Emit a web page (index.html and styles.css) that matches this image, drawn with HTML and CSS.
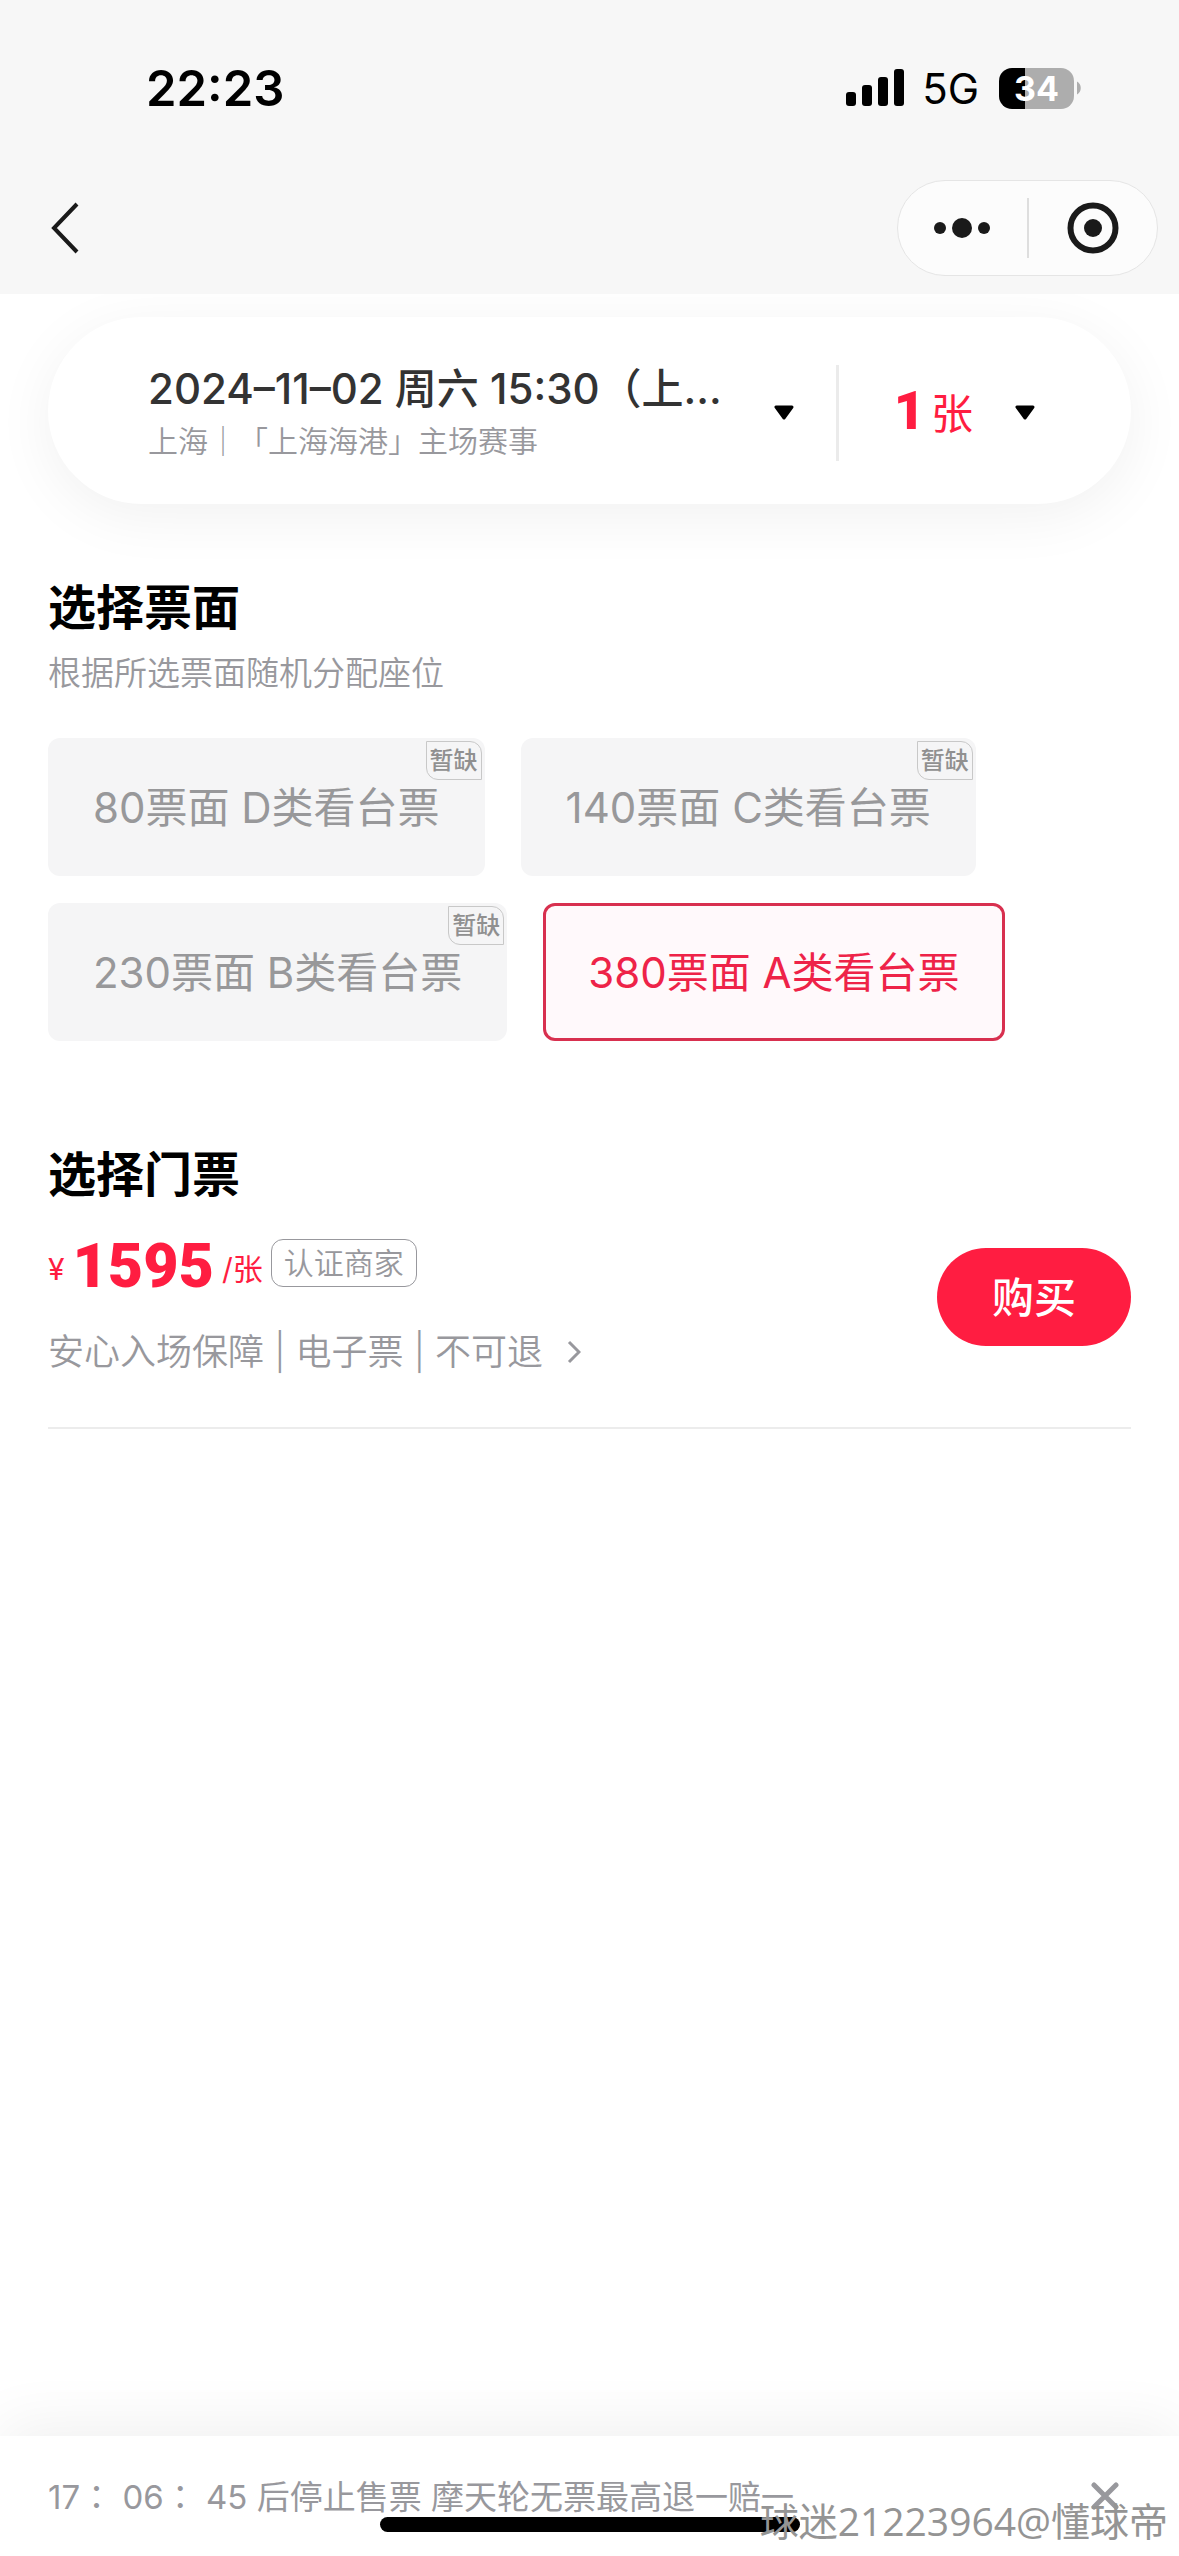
FILE: index.html
```html
<!DOCTYPE html>
<html lang="zh-CN">
<head>
<meta charset="utf-8">
<meta name="viewport" content="width=device-width, initial-scale=1">
<title>选择票面</title>
<link rel="stylesheet" href="styles.css">
</head>
<body>
<div class="page">
  <header class="header">
    <div class="status">
      <span class="clock">22:23</span>
      <div class="status-icons">
        <svg class="signal" width="58" height="38" viewBox="0 0 58 38" aria-hidden="true">
          <rect x="0" y="23" width="10" height="14" rx="3"/>
          <rect x="16" y="16" width="10" height="21" rx="3"/>
          <rect x="32" y="8" width="10" height="29" rx="3"/>
          <rect x="48" y="0" width="10" height="37" rx="3"/>
        </svg>
        <span class="network">5G</span>
        <span class="battery"><span class="battery-level">34</span></span>
        <svg class="battery-cap" width="4" height="14" viewBox="0 0 4 14" aria-hidden="true"><path d="M0 0.500C5 3 5 11 0 13.500Z"/></svg>
      </div>
    </div>
    <nav class="nav">
      <button class="icon-button" type="button" aria-label="返回">
        <svg width="32" height="54" viewBox="0 0 32 54" aria-hidden="true"><path class="back-line" d="M28 3 5 27 28 51"/></svg>
      </button>
      <div class="capsule">
        <button class="capsule-button" type="button" aria-label="更多">
          <svg width="58" height="22" viewBox="0 0 58 22" aria-hidden="true"><circle cx="7" cy="11" r="6"/><circle cx="29" cy="11" r="10"/><circle cx="51" cy="11" r="6"/></svg>
        </button>
        <span class="capsule-divider"></span>
        <button class="capsule-button" type="button" aria-label="关闭小程序">
          <svg width="52" height="52" viewBox="0 0 52 52" aria-hidden="true"><circle class="ring" cx="26" cy="26" r="22.500"/><circle cx="26" cy="26" r="9"/></svg>
        </button>
      </div>
    </nav>
  </header>

  <main class="main">
    <section class="selector">
      <button class="session" type="button">
        <span class="session-text">
          <span class="session-date">2024–11–02 周六 15:30（上...</span>
          <span class="session-place">上海｜「上海海港」主场赛事</span>
        </span>
        <svg width="20" height="16" viewBox="0 0 20 16" aria-hidden="true"><path class="caret" d="M2 2H18L10 13Z"/></svg>
      </button>
      <span class="selector-divider"></span>
      <button class="quantity" type="button">
        <span class="quantity-text"><span class="quantity-number">1</span><span class="quantity-unit">张</span></span>
        <svg width="20" height="16" viewBox="0 0 20 16" aria-hidden="true"><path class="caret" d="M2 2H18L10 13Z"/></svg>
      </button>
    </section>

    <section class="faces">
      <h2 class="heading">选择票面</h2>
      <p class="hint">根据所选票面随机分配座位</p>
      <div class="chips">
        <button class="chip" type="button" disabled>80票面 D类看台票<span class="badge">暂缺</span></button>
        <button class="chip" type="button" disabled>140票面 C类看台票<span class="badge">暂缺</span></button>
        <button class="chip" type="button" disabled>230票面 B类看台票<span class="badge">暂缺</span></button>
        <button class="chip chip-selected" type="button" aria-pressed="true">380票面 A类看台票</button>
      </div>
    </section>

    <section class="tickets">
      <h2 class="heading">选择门票</h2>
      <div class="ticket">
        <div class="ticket-info">
          <div class="price-row">
            <span class="price"><span class="currency">¥</span><span class="amount">1595</span><span class="per">/张</span></span>
            <span class="tag">认证商家</span>
          </div>
          <a class="services" href="#services">安心入场保障 | 电子票 | 不可退
            <svg width="14" height="26" viewBox="0 0 14 26" aria-hidden="true"><path class="more-line" d="M2 3 12 13 2 23"/></svg>
          </a>
        </div>
        <button class="buy" type="button">购买</button>
      </div>
    </section>
  </main>

  <footer class="footer">
    <p class="notice">17<span class="colon" lang="zh-Hant">：</span> 06<span class="colon" lang="zh-Hant">：</span> 45 后停止售票 摩天轮无票最高退一赔一</p>
    <button class="icon-button" type="button" aria-label="关闭">
      <svg width="28" height="28" viewBox="0 0 28 28" aria-hidden="true"><path class="close-line" d="M3 3 25 25M25 3 3 25"/></svg>
    </button>
    <span class="home-indicator"></span>
    <span class="watermark">球迷21223964@懂球帝</span>
  </footer>
</div>
</body>
</html>
```
FILE: styles.css
```css
* {
  box-sizing: border-box;
}

body {
  margin: 0;
  background: #fff;
  color: #000;
  font-family: Inter, "Noto Sans CJK SC", sans-serif;
  font-size: 42px;
}

h2,
p {
  margin: 0;
}

button {
  margin: 0;
  padding: 0;
  border: 0;
  background: none;
  color: inherit;
  font: inherit;
}

svg {
  display: block;
  flex: none;
}

.page {
  display: flex;
  flex-direction: column;
  min-height: 100vh;
}

/* Status bar and navigation */
.header {
  position: relative;
  z-index: 1;
  padding-bottom: 18px;
  background: #f7f7f7;
}

.status {
  display: flex;
  align-items: center;
  justify-content: space-between;
  height: 176px;
  padding: 0 98px 0 146px;
}

.clock {
  font-size: 49px;
  font-weight: 600;
}

.status-icons {
  display: flex;
  align-items: center;
}

.network {
  margin: 0 20px 0 18px;
  font-size: 42px;
}

.battery {
  width: 75px;
  height: 41px;
  border-radius: 13px;
  background: linear-gradient(90deg, #000 26px, #adadad 26px);
  color: #fff;
  font-size: 34px;
  font-weight: 700;
  line-height: 41px;
  text-align: center;
}

.battery-cap {
  margin-left: 3px;
  fill: #adadad;
}

.nav {
  display: flex;
  align-items: center;
  justify-content: space-between;
  padding: 4px 21px 0 49px;
}

.back-line {
  fill: none;
  stroke: #1a1a1a;
  stroke-width: 4;
}

.capsule {
  display: flex;
  align-items: center;
  width: 261px;
  height: 96px;
  border: 1px solid #e5e5e5;
  border-radius: 48px;
  background: #fcfcfc;
  fill: #1a1a1a;
}

.capsule-button {
  display: flex;
  flex: 1;
  align-items: center;
  justify-content: center;
}

.capsule-divider {
  width: 2px;
  height: 60px;
  background: #dedede;
}

.ring {
  fill: none;
  stroke: #1a1a1a;
  stroke-width: 6;
}

/* Session and quantity selector */
.main {
  flex: 1;
  padding: 23px 48px 0;
}

.selector {
  display: flex;
  align-items: center;
  height: 187px;
  padding-top: 4px;
  border-radius: 94px;
  background: #fff;
  box-shadow: 0 12px 60px rgba(0, 0, 0, 0.06);
}

.session {
  display: flex;
  flex: 1;
  align-items: center;
  justify-content: space-between;
  padding: 0 42px 0 100px;
  text-align: left;
}

.session-text {
  display: flex;
  flex-direction: column;
}

.session-date {
  color: #333;
  font-weight: 500;
  line-height: 56px;
  white-space: nowrap;
}

.session-place {
  color: #98989d;
  font-size: 30px;
  font-weight: 350;
  line-height: 48px;
}

.caret {
  fill: #000;
  stroke: #000;
  stroke-width: 3;
  stroke-linejoin: round;
}

.selector-divider {
  width: 3px;
  height: 96px;
  background: #ebebeb;
}

.quantity {
  display: flex;
  align-items: center;
  gap: 42px;
  padding: 0 96px 0 55px;
  color: #ff1d41;
}

.quantity-text {
  display: flex;
  align-items: baseline;
  gap: 6px;
  line-height: 60px;
}

.quantity-number {
  font-family: Roboto, sans-serif;
  font-size: 54px;
  font-weight: 900;
}

/* Ticket faces */
.faces {
  padding-top: 71px;
}

.heading {
  font-size: 48px;
  font-weight: 700;
  line-height: 66px;
}

.hint {
  margin-top: 8px;
  color: #98989d;
  font-size: 33px;
  font-weight: 350;
  line-height: 48px;
}

.chips {
  display: flex;
  flex-wrap: wrap;
  gap: 27px 36px;
  margin-top: 41px;
}

.chip {
  position: relative;
  height: 138px;
  padding: 0 45px 6px;
  border-radius: 12px;
  background: #f5f5f6;
  color: #98989a;
  font-weight: 400;
  white-space: nowrap;
}

.chip-selected {
  padding: 0 42px 6px;
  border: 3px solid #d8304f;
  background: #fff9fb;
  color: #ee2348;
}

.badge {
  position: absolute;
  top: 3px;
  right: 3px;
  width: 56px;
  height: 39px;
  border: 1px solid #c8c8c8;
  border-radius: 0 12px;
  color: #909090;
  font-size: 24px;
  font-weight: 500;
  line-height: 38px;
  text-align: center;
}

/* Ticket offers */
.tickets {
  padding-top: 101px;
}

.ticket {
  display: flex;
  align-items: flex-start;
  justify-content: space-between;
  padding: 28px 0 51px;
  border-bottom: 2px solid #ececec;
}

.price-row {
  display: flex;
  align-items: flex-start;
  gap: 8px;
  height: 60px;
}

.price {
  display: flex;
  align-items: flex-end;
  color: #ff1d41;
  line-height: 60px;
}

.currency,
.per {
  font-size: 30px;
  font-weight: 400;
  line-height: 54px;
}

.amount {
  margin: 0 8px;
  font-family: Roboto, sans-serif;
  font-size: 61px;
  font-weight: 900;
}

.tag {
  height: 48px;
  margin-top: 3px;
  padding: 0 12px;
  border: 1px solid #98989d;
  border-radius: 12px;
  color: #98989d;
  font-size: 30px;
  font-weight: 350;
  line-height: 46px;
}

.services {
  display: flex;
  align-items: center;
  gap: 24px;
  margin-top: 32px;
  color: #98989d;
  font-size: 36px;
  font-weight: 350;
  line-height: 48px;
  text-decoration: none;
}

.more-line {
  fill: none;
  stroke: #98989d;
  stroke-width: 3;
}

.buy {
  height: 98px;
  margin-top: 12px;
  padding: 0 55px 6px;
  border-radius: 49px;
  background: #ff1d41;
  color: #fff;
  font-weight: 500;
}

/* Countdown bar */
.footer {
  position: relative;
  display: flex;
  align-items: center;
  justify-content: space-between;
  height: 120px;
  padding: 0 60px 0 48px;
  background: #fff;
  box-shadow: 0 -12px 60px rgba(0, 0, 0, 0.06);
}

.notice {
  color: #98989d;
  font-size: 33px;
  font-weight: 400;
  line-height: 48px;
}

.colon {
  font-family: "Noto Sans CJK TC", sans-serif;
}

.close-line {
  fill: none;
  stroke: #98989d;
  stroke-width: 5;
  stroke-linecap: round;
}

.home-indicator {
  position: absolute;
  bottom: 24px;
  left: 50%;
  width: 420px;
  height: 15px;
  margin-left: -210px;
  border-radius: 8px;
  background: #000;
}

.watermark {
  position: absolute;
  right: 11px;
  bottom: 8px;
  color: #949494;
  font-family: "Open Sans", "Noto Sans CJK SC", sans-serif;
  font-size: 39px;
  font-weight: 400;
  line-height: 54px;
}
```
